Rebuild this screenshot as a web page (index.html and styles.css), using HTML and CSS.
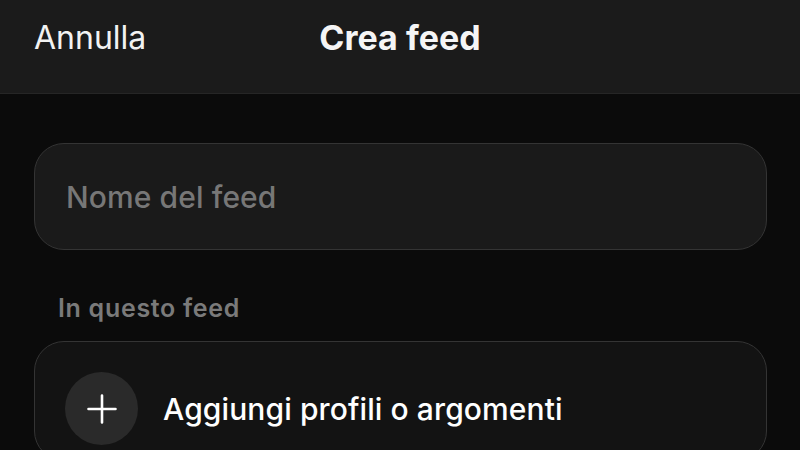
FILE: index.html
```html
<!DOCTYPE html>
<html lang="it">
<head>
<meta charset="utf-8">
<title>Crea feed</title>
<link rel="stylesheet" href="styles.css">
</head>
<body>
<header class="topbar">
  <span class="cancel">Annulla</span>
  <span class="title">Crea feed</span>
  <span class="spacer"></span>
</header>
<main class="content">
  <div class="name-field">
    <span class="placeholder">Nome del feed</span>
  </div>
  <div class="section-label">In questo feed</div>
  <div class="card">
    <div class="add-row">
      <span class="add-icon">
        <svg width="30" height="30" viewBox="0 0 30 30" aria-hidden="true">
          <path d="M15 1.5V28.5M1.5 15H28.5" stroke="#ffffff" stroke-width="2.6" stroke-linecap="round" fill="none"/>
        </svg>
      </span>
      <span class="add-text">Aggiungi profili o argomenti</span>
    </div>
  </div>
</main>
</body>
</html>
```
FILE: styles.css
```css
* { box-sizing: border-box; }
html, body {
  margin: 0;
  padding: 0;
  background: #0b0b0b;
  height: 100%;
  overflow: hidden;
  font-family: Inter, "Noto Sans", sans-serif;
  color: #ffffff;
}
.topbar {
  height: 94px;
  background: #1b1b1b;
  border-bottom: 1px solid #262626;
  display: grid;
  grid-template-columns: 1fr auto 1fr;
  align-items: center;
  padding: 0 34px 18px;
}
.cancel {
  font-size: 32px;
  font-weight: 400;
  color: #f2f2f2;
}
.title {
  font-size: 34px;
  font-weight: 700;
  color: #f5f5f5;
}
.content {
  padding: 49px 33px 0 34px;
}
.name-field {
  height: 107px;
  border-radius: 30px;
  background: #1a1a1a;
  border: 1.5px solid #343434;
  display: flex;
  align-items: center;
  padding-left: 31px;
}
.placeholder {
  font-size: 30px;
  font-weight: 500;
  color: #777777;
  letter-spacing: 0.1px;
}
.section-label {
  margin: 42px 0 0 24px;
  font-size: 25px;
  font-weight: 600;
  letter-spacing: 0.7px;
  color: #7a7a7a;
  line-height: 32px;
}
.card {
  margin-top: 17px;
  height: 120px;
  border-radius: 30px;
  background: #131313;
  border: 1.5px solid #343434;
  padding: 30px 0 0 30px;
}
.add-row {
  display: flex;
  align-items: center;
  gap: 25px;
}
.add-icon {
  width: 73px;
  height: 73px;
  border-radius: 50%;
  background: #2a2a2a;
  display: flex;
  align-items: center;
  justify-content: center;
  flex-shrink: 0;
}
.add-text {
  font-size: 30px;
  font-weight: 500;
  letter-spacing: 0.1px;
  color: #ffffff;
}
```
